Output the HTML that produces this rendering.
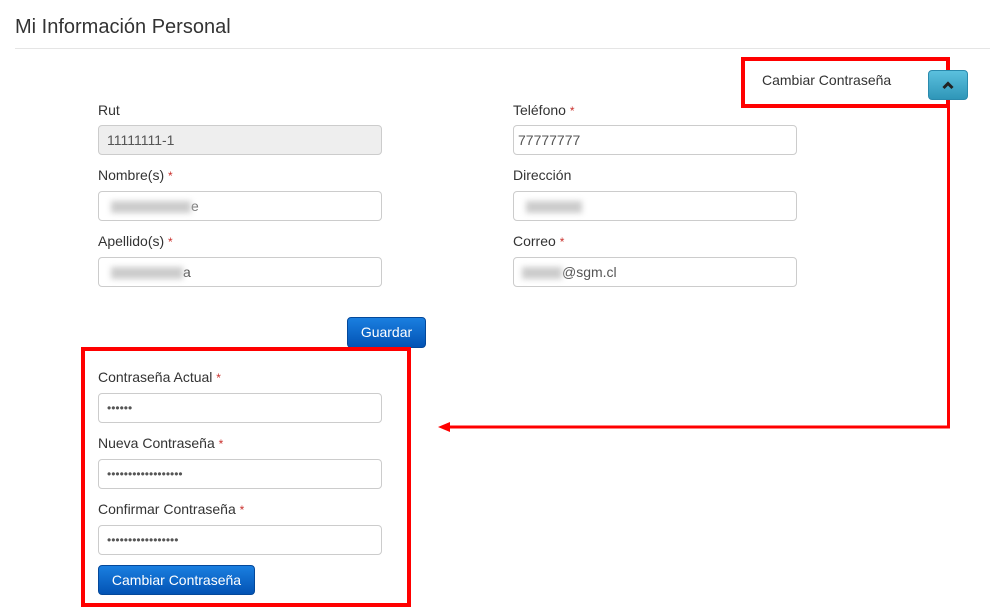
<!DOCTYPE html>
<html><head><meta charset="utf-8"><style>
body{margin:0;width:993px;height:612px;background:#fff;font-family:"Liberation Sans",Arial,sans-serif;color:#333;position:relative;overflow:hidden}
.a{position:absolute}
h1{position:absolute;left:15px;top:16px;margin:0;font-size:20px;font-weight:normal;color:#333}
.hr{left:15px;top:48px;width:975px;height:1px;background:#e5e5e5}
.lbl{font-size:14px;color:#333}
.lbl i{font-style:normal;color:#c9302c;font-size:12px}
.in{height:28px;border:1px solid #ccc;border-radius:4px;background:#fff;font-size:14px;line-height:28px;padding-left:12px;box-sizing:content-box;width:270px;color:#555}
.dis{background:#eee}
.btn{color:#fff;font-size:14px;text-align:center;border-radius:4px;background:linear-gradient(#1a7fe0,#0353b4);border:1px solid #04489a;box-sizing:border-box}
.blur{display:inline-block;background:#ccc;filter:blur(3px);height:12px;vertical-align:middle}
.red{border:4px solid #f00;box-sizing:border-box}
</style></head><body>
<h1>Mi Información Personal</h1>
<div class="a hr"></div>

<div class="a lbl" style="left:98px;top:102px">Rut</div>
<div class="a in dis" style="left:98px;top:125px;padding-left:8px;width:274px">11111111-1</div>
<div class="a lbl" style="left:98px;top:167px">Nombre(s) <i>*</i></div>
<div class="a in" style="left:98px;top:191px"><span class="blur" style="width:80px"></span><span style="color:#777">e</span></div>
<div class="a lbl" style="left:98px;top:233px">Apellido(s) <i>*</i></div>
<div class="a in" style="left:98px;top:257px"><span class="blur" style="width:72px"></span>a</div>

<div class="a lbl" style="left:513px;top:102px">Teléfono <i>*</i></div>
<div class="a in" style="left:513px;top:125px;padding-left:4px;width:278px">77777777</div>
<div class="a lbl" style="left:513px;top:167px">Dirección</div>
<div class="a in" style="left:513px;top:191px"><span class="blur" style="width:56px"></span></div>
<div class="a lbl" style="left:513px;top:233px">Correo <i>*</i></div>
<div class="a in" style="left:513px;top:257px"><span class="blur" style="width:40px;margin-left:-4px"></span>@sgm.cl</div>

<div class="a btn" style="left:347px;top:317px;width:79px;height:31px;line-height:29px">Guardar</div>

<div class="a lbl" style="left:98px;top:369px">Contraseña Actual <i>*</i></div>
<div class="a in" style="left:98px;top:393px;font-size:12px;padding-left:8px;width:274px">••••••</div>
<div class="a lbl" style="left:98px;top:435px">Nueva Contraseña <i>*</i></div>
<div class="a in" style="left:98px;top:459px;font-size:12px;padding-left:8px;width:274px">••••••••••••••••••</div>
<div class="a lbl" style="left:98px;top:501px">Confirmar Contraseña <i>*</i></div>
<div class="a in" style="left:98px;top:525px;font-size:12px;padding-left:8px;width:274px">•••••••••••••••••</div>
<div class="a btn" style="left:98px;top:565px;width:157px;height:30px;line-height:28px">Cambiar Contraseña</div>

<div class="a lbl" style="left:762px;top:72px">Cambiar Contraseña</div>
<div class="a red" style="left:741px;top:57px;width:209px;height:51px"></div>
<div class="a" style="left:928px;top:70px;width:40px;height:30px;border-radius:4px;background:linear-gradient(#5bc0de,#2f96b8);border:1px solid #2a8aad;box-sizing:border-box">
<svg width="38" height="28" style="position:absolute;left:0;top:0"><path d="M14.5 17 L19 12.5 L23.5 17" stroke="#222" stroke-width="3" fill="none"/></svg></div>

<div class="a red" style="left:81px;top:347px;width:330px;height:260px"></div>
<svg class="a" style="left:0;top:0" width="993" height="612">
<path d="M948.5 100 V427 H448" stroke="#f00" stroke-width="3" fill="none"/>
<path d="M438 427 L450 422 L450 432 Z" fill="#f00"/>
</svg>
</body></html>
